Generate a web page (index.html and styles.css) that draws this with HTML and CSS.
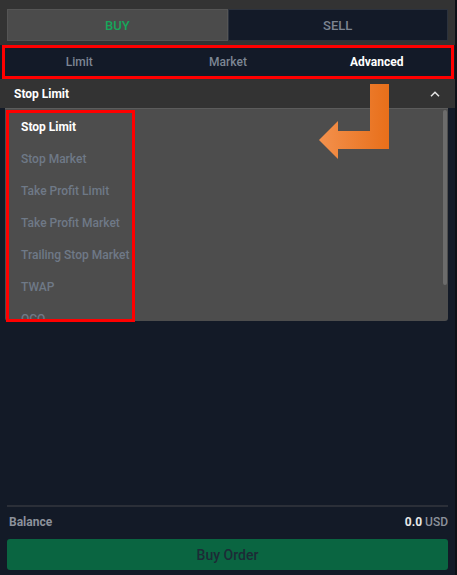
FILE: index.html
```html
<!DOCTYPE html>
<html lang="en">
<head>
<meta charset="utf-8">
<title>Order form</title>
<link rel="stylesheet" href="styles.css">
</head>
<body>
<div class="app">
  <div class="header">
    <div class="tabs">
      <button class="tab tab-buy">BUY</button>
      <button class="tab tab-sell">SELL</button>
    </div>
  </div>
  <div class="segments">
    <span class="seg">Limit</span>
    <span class="seg">Market</span>
    <span class="seg seg-active">Advanced</span>
  </div>
  <div class="select">
    <span class="select-label">Stop Limit</span>
    <svg class="chevron" width="10" height="6" viewBox="0 0 10 6"><path d="M1 5.2 L5 1.2 L9 5.2" fill="none" stroke="#e6e6e6" stroke-width="1.5"/></svg>
  </div>
  <div class="content">
    <div class="check-row">
      <span class="checkbox"></span>
      <span class="check-label">Reduce Only</span>
    </div>
  </div>
  <div class="footer">
    <div class="divider"></div>
    <div class="balance">
      <span class="balance-label">Balance</span>
      <span class="balance-value"><b>0.0</b> USD</span>
    </div>
    <button class="buy-order">Buy Order</button>
  </div>

  <div class="dropdown">
    <div class="item item-active">Stop Limit</div>
    <div class="item">Stop Market</div>
    <div class="item">Take Profit Limit</div>
    <div class="item">Take Profit Market</div>
    <div class="item">Trailing Stop Market</div>
    <div class="item">TWAP</div>
    <div class="item">OCO</div>
    <div class="scrollbar"></div>
  </div>
  <div class="mark-items"></div>
  <svg class="arrow" width="70" height="76" viewBox="0 0 70 76">
    <defs>
      <linearGradient id="ag" x1="0" y1="0" x2="1" y2="0">
        <stop offset="0" stop-color="#f3914d"/>
        <stop offset="1" stop-color="#e86f1a"/>
      </linearGradient>
    </defs>
    <polygon points="51,0 70,0 70,65 19,65 19,75 0,56 19,37 19,47 51,47" fill="url(#ag)"/>
  </svg>
</div>
</body>
</html>
```

FILE: styles.css
```css
* { box-sizing: border-box; }
html, body { margin: 0; padding: 0; background: #131a27; }
body { font-family: Roboto, "Liberation Sans", sans-serif; }

.app {
  position: relative;
  width: 457px;
  height: 575px;
  display: flex;
  flex-direction: column;
  background: #131a27;
  border-right: 2px solid #0d1016;
  overflow: hidden;
}

.header {
  background: #333333;
  padding: 9px 7px 4px 7px;
}
.tabs { display: flex; width: 441px; }
.tab {
  flex: 1;
  height: 32px;
  font: 500 13px Roboto, "Liberation Sans", sans-serif;
  border: 1px solid;
  padding: 0;
}
.tab-buy { background: #4b4b4b; border-color: #555555; color: #16a65a; }
.tab-sell { background: #131a28; border-color: #2c323d; color: #7c8491; }

.segments {
  display: flex;
  margin: 0 1px 0 2px;
  height: 34px;
  border: 3px solid #ff0000;
  background: #131a28;
}
.seg {
  flex: 1;
  display: flex;
  align-items: center;
  justify-content: center;
  font-size: 12px;
  font-weight: 500;
  color: #7d8694;
}
.seg-active { color: #ffffff; font-weight: 700; }

.select {
  display: flex;
  align-items: center;
  justify-content: space-between;
  height: 29px;
  padding: 0 15px 0 14px;
  background: #333333;
}
.select-label { font-size: 12px; font-weight: 700; color: #ffffff; }

.content { flex: 1; padding: 196px 8px 0 8px; }
.check-row { display: flex; align-items: center; gap: 6px; height: 18px; }
.checkbox { width: 10px; height: 10px; border: 1px solid #6b7280; border-radius: 2px; }
.check-label { font-size: 12px; color: #8a909b; }

.footer { padding: 0 7px 5px 7px; }
.divider { height: 2px; background: #2b2f38; }
.balance {
  display: flex;
  justify-content: space-between;
  align-items: center;
  height: 30px;
  margin-bottom: 2px;
  padding: 0 0 0 2px;
  font-size: 12px;
}
.balance-label { font-weight: 700; color: #8c919b; }
.balance-value { color: #8c919b; font-weight: 500; font-size: 12px; }
.balance-value b { color: #e8e8e8; font-weight: 700; }
.buy-order {
  width: 100%;
  height: 31px;
  border: none;
  border-radius: 3px;
  background: #0a6541;
  color: #1d2a36;
  font: 500 14px Roboto, "Liberation Sans", sans-serif;
}

.dropdown {
  position: absolute;
  left: 5px;
  top: 108px;
  width: 443px;
  height: 213px;
  padding-top: 2px;
  background: #4d4d4d;
  border-top: 1px solid #5c5c5c;
  border-radius: 0 0 3px 3px;
  overflow: hidden;
}
.item {
  height: 32px;
  display: flex;
  align-items: center;
  padding-left: 16px;
  font-size: 12px;
  font-weight: 500;
  color: #6f7987;
}
.item-active { color: #ffffff; font-weight: 700; }
.scrollbar {
  position: absolute;
  right: 1px;
  top: 1px;
  width: 4px;
  height: 175px;
  border-radius: 2px;
  background: #6c6c6c;
}

.mark-items {
  position: absolute;
  left: 6px;
  top: 110px;
  width: 129px;
  height: 212px;
  border: 3px solid #ff0000;
}
.arrow { position: absolute; left: 319px; top: 84px; }
```
